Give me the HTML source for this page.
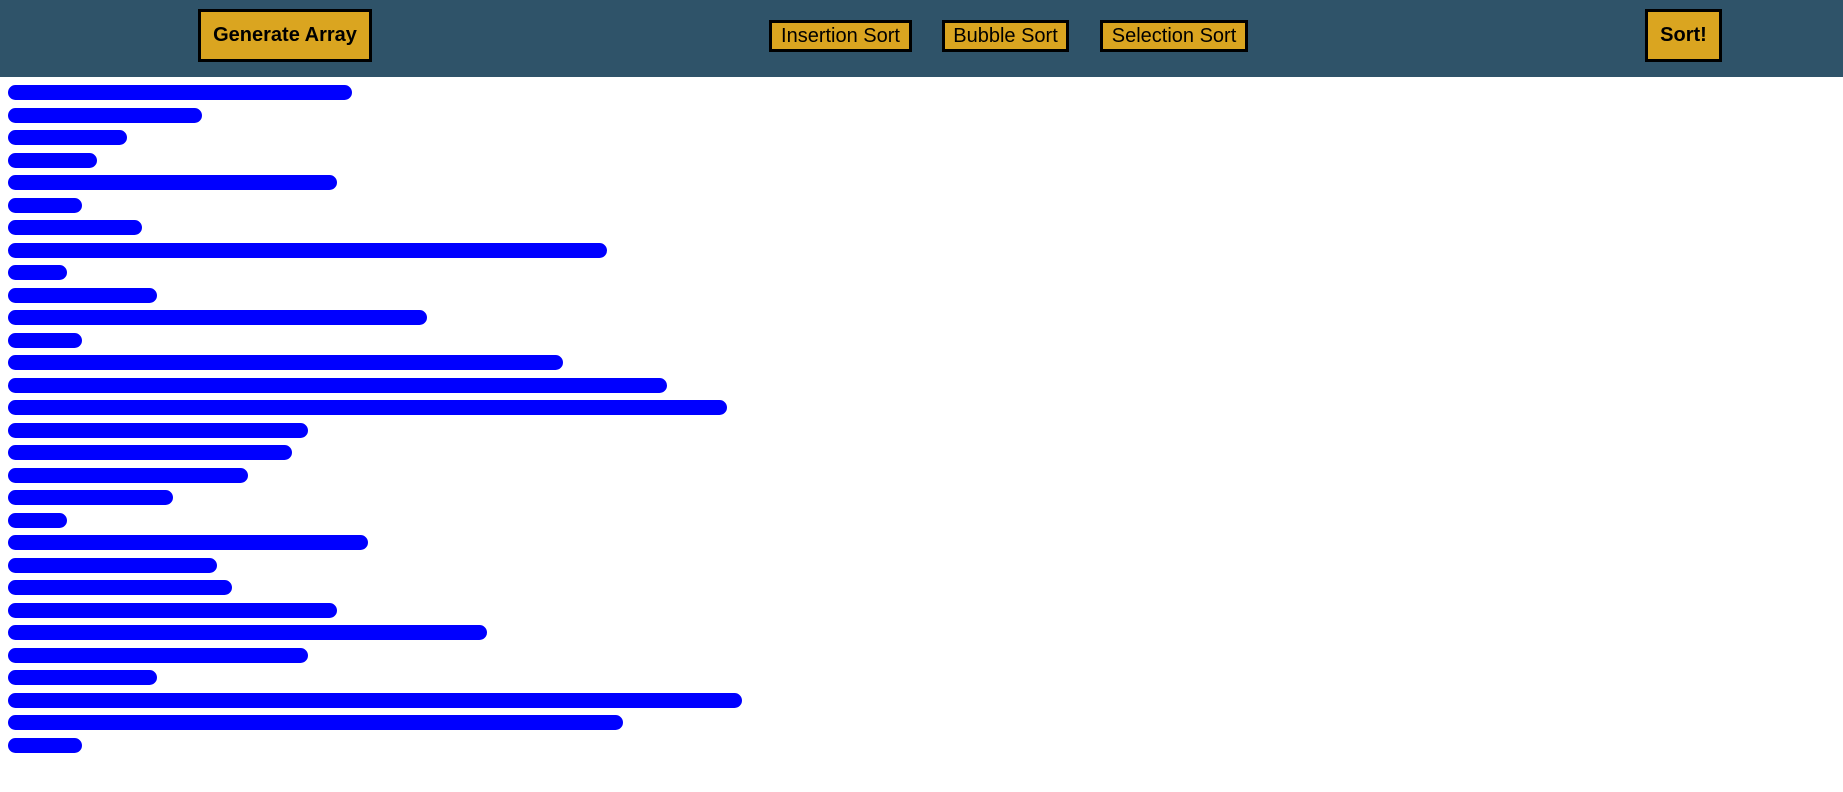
<!DOCTYPE html>
<html><head><style>
body{margin:0;width:1843px;height:792px;background:#fff;font-family:"Liberation Sans",Arial,sans-serif;position:relative;overflow:hidden}
.hd{position:absolute;left:0;top:0;width:1843px;height:77px;background:#2f5369}
.b{position:absolute;box-sizing:border-box;background:#daa520;border:3px solid #000;display:flex;align-items:center;justify-content:center;color:#000;font-size:20px;white-space:nowrap}
.bar{position:absolute;left:8px;height:15px;background:#0000ff;border-radius:8px}
</style></head><body>
<div class="hd">
<div class="b" style="left:198px;top:9px;width:174px;height:53px;font-weight:bold">Generate Array</div>
<div class="b" style="left:769px;top:20px;width:143px;height:32px">Insertion Sort</div>
<div class="b" style="left:942px;top:20px;width:127px;height:32px">Bubble Sort</div>
<div class="b" style="left:1100px;top:20px;width:148px;height:32px">Selection Sort</div>
<div class="b" style="left:1645px;top:9px;width:77px;height:53px;font-weight:bold">Sort!</div>
</div>
<div id="bars"></div>
<script>
var e=[300,172,108,83,287,70,121,517,57,134,364,70,479,568,619,262,249,211,147,57,313,185,198,287,415,262,134,632,530,70];
var h='';for(var i=0;i<e.length;i++){h+='<div class="bar" style="top:'+Math.round(85+i*22.5)+'px;width:'+Math.round((e[i]-7)*1.175)+'px"></div>';}
document.getElementById('bars').innerHTML=h;
</script>
</body></html>
